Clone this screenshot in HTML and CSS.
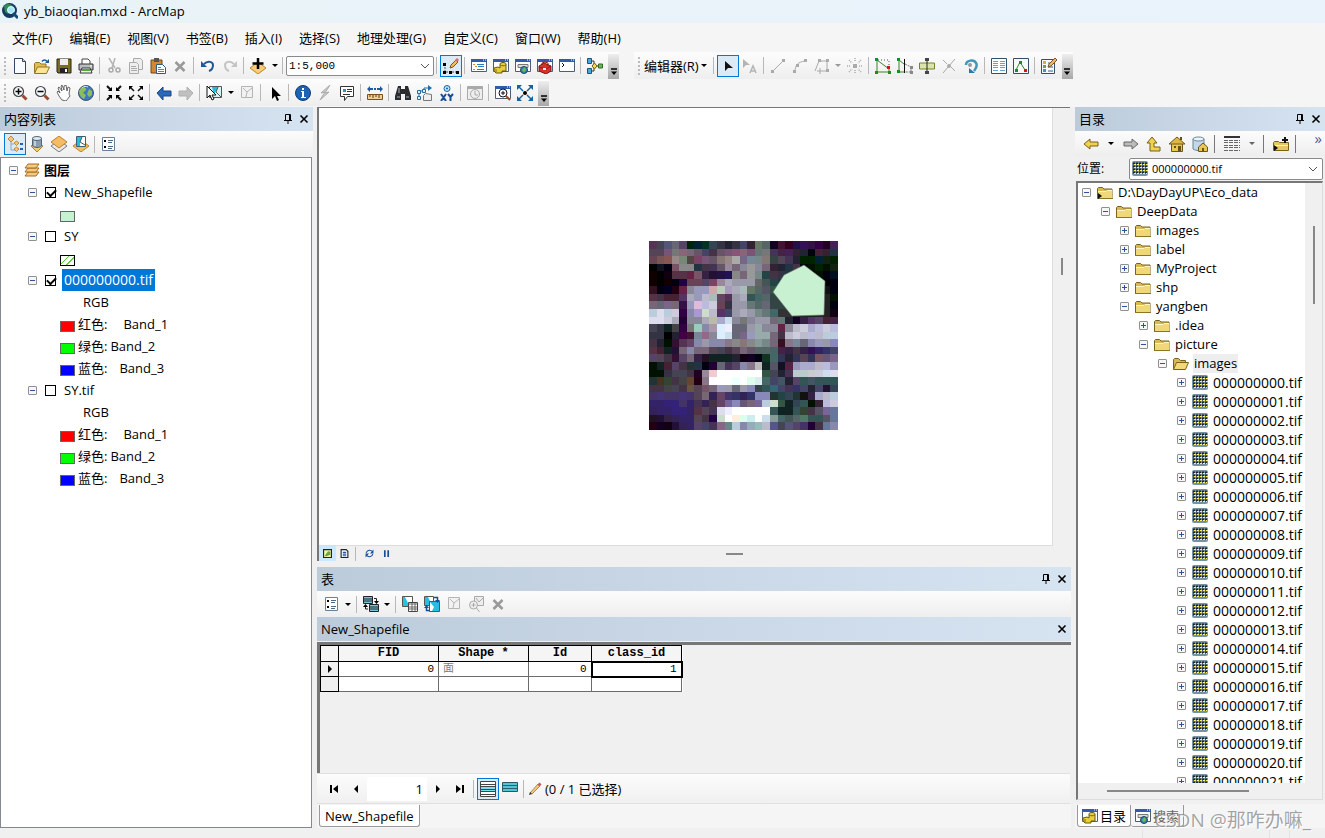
FILE: index.html
```
<!DOCTYPE html>
<html lang="zh-CN">
<head>
<meta charset="utf-8">
<title>yb_biaoqian.mxd - ArcMap</title>
<link rel="stylesheet" href="styles.css">
</head>
<body>
<svg class="sprite" aria-hidden="true">
  <symbol id="new" viewBox="0 0 16 16"><path d="M2.5.5h8l3 3v12h-11z" fill="#f8fbff" stroke="#34465f"/><path d="M10.5.5v3h3" fill="#c8d6e8" stroke="#34465f"/></symbol>
  <symbol id="open" viewBox="0 0 16 16"><path d="M.5 15V5.500l1-1h4l1.500 1.500h5v3" fill="#e2bd55" stroke="#957320"/><path d="M.5 15.500 3.500 9h12l-3 6.500z" fill="#fbe496" stroke="#957320"/><path d="M8 3.500c1.500-2 3.500-2 5 0" fill="none" stroke="#16599c" stroke-width="1.500"/><path d="M15 1v4h-4z" fill="#16599c"/></symbol>
  <symbol id="save" viewBox="0 0 16 16"><path d="M1 1h14v14H2l-1-1z" fill="#7b6e22" stroke="#28251a"/><path d="M4 1h8v6H4z" fill="#eee"/><path d="M4 10h8v5H4z" fill="#222"/><path d="M9 11h2v3H9z" fill="#fff"/></symbol>
  <symbol id="print" viewBox="0 0 16 16"><path d="M4 6V1h6l2 2v3" fill="#fff" stroke="#444"/><path d="M1 6h14v6H1z" fill="#b8bdc0" stroke="#333"/><path d="M4 10h8l2 5H2z" fill="#fff" stroke="#333"/><path d="M4 12h8" stroke="#4aae35" stroke-width="2"/><path d="M12 8h2" stroke="#fff"/></symbol>
  <symbol id="cut" viewBox="0 0 16 16"><path d="M3 0l6 10M9 0 6 10" stroke="#b5b5b5" stroke-width="1.500"/><g fill="none" stroke="#aaa" stroke-width="1.500"><circle cx="5" cy="12" r="2"/><circle cx="12" cy="12" r="2"/></g></symbol>
  <symbol id="copy" viewBox="0 0 16 16"><g fill="#eee" stroke="#aaa"><path d="M5.500.5h7l2 2v9h-9z"/><path d="M1.500 4.500h7l2 2v9h-9zM3 8.500h5M3 10.500h6M3 12.500h6"/></g></symbol>
  <symbol id="paste" viewBox="0 0 16 16"><path d="M1 2h11v13H1z" fill="#d18a2b" stroke="#6b4a1d"/><path d="M4 0h5v4H4z" fill="#555"/><path d="M6.500 6.500h6l3 3v6h-9z" fill="#fff" stroke="#345781"/><path d="M8 9.500h3M8 11.500h6M8 13.500h6" stroke="#4787c5"/></symbol>
  <symbol id="delete" viewBox="0 0 16 16"><path d="m3.500 4 9 9m0-9-9 9" stroke="#999" stroke-width="2.500"/></symbol>
  <symbol id="undo" viewBox="0 0 16 16"><path d="M4 6c4-4 9-2 9 1 0 3-1 5-4 6" fill="none" stroke="#205795" stroke-width="2"/><path d="M1 3v6h6z" fill="#205795"/></symbol>
  <symbol id="redo" viewBox="0 0 16 16"><path d="M12 6C8 2 3 4 3 7c0 3 1 5 4 6" fill="none" stroke="#c4c4c4" stroke-width="2"/><path d="M15 3v6H9z" fill="#c4c4c4"/></symbol>
  <symbol id="add" viewBox="0 0 16 16"><path d="m0 10 8-6 8 6-8 6z" fill="#f7cd75" stroke="#ba852c"/><path d="M8 0v11M2.500 5.500h11" stroke="#000" stroke-width="2.500"/></symbol>
  <symbol id="edit" viewBox="0 0 16 16"><path d="M2 6v8h12" fill="none" stroke="#555" stroke-dasharray="2 1"/><path d="M0 5h3v3H0zm0 8h3v3H0zm6 0h3v3H6zm7 0h3v3h-3z"/><path d="m7 10 1-3 5-5 2 2-5 5z" fill="#f5bd5c" stroke="#79541e"/><path d="m13 1 2 2" stroke="#d4706c" stroke-width="3"/></symbol>
  <symbol id="win" viewBox="0 0 16 16"><path d="M.5 1.500h15v12H.5z" fill="#fff" stroke="#4f5f70"/><path d="M0 1h16v3H0z" fill="#315cae"/><path d="M12 2h1m1 0h1" stroke="#fff"/></symbol>
  <symbol id="toc" viewBox="0 0 16 16"><use href="#win"/><path d="M2 6.500h2m0 2h2m-4 3h2" stroke="#d7901f"/><path d="M6 6.500h7M7 8.500h6M6 11.500h7" stroke="#2d78be"/></symbol>
  <symbol id="catalog" viewBox="0 0 16 16"><use href="#win"/><path d="M7 6c0-2 6-2 6 0v7H9v2H3l-2-2v-3l4-1 2 1z" fill="#e8ce39" stroke="#685910"/><path d="M7 7c2 1 4 1 6 0M3 11v3" fill="none" stroke="#78661a"/></symbol>
  <symbol id="search" viewBox="0 0 16 16"><use href="#win"/><path d="M3 6.500h10v3H3z" fill="#ddd" stroke="#777"/><circle cx="9" cy="12" r="3.500" fill="#2f89bd" stroke="#245"/><path d="m7 12 3-3 1 3-2 2z" fill="#72bb4b"/></symbol>
  <symbol id="toolbox" viewBox="0 0 16 16"><use href="#win"/><path d="m2 8 5-3 7 3v5l-5 3-7-3z" fill="#d83228" stroke="#761c18"/><path d="M5 7V5l3-1 3 1v3M2 9l7 2 5-3" fill="none" stroke="#8e1b17"/><path d="M6 10h3v2H6z" fill="#eee"/></symbol>
  <symbol id="python" viewBox="0 0 16 16"><use href="#win"/><path d="m3 5 2 2-2 2" fill="none" stroke="#111"/></symbol>
  <symbol id="model" viewBox="0 0 16 16"><path d="M4 3h3v10H4m3-5h6" fill="none" stroke="#333"/><path d="M.5.5h4v5h-4zm0 10h4v5h-4z" fill="#49a8d9" stroke="#17577d"/><path d="m5 8 2.500-3L10 8l-2.500 3z" fill="#f5d94b" stroke="#6c6019"/><path d="M11.500 6h4v4h-4z" fill="#66bb50" stroke="#316a25"/></symbol>
  <symbol id="pointer" viewBox="0 0 16 16"><path d="M5 2v12l3-3 2 5 2-1-2-4h4z"/></symbol>
  <symbol id="editptr" viewBox="0 0 16 16"><path d="M5 3v10l3-3h5z" fill="#111"/></symbol>
  <symbol id="annot" viewBox="0 0 16 16"><path d="M1 1v9l3-3h4z" fill="#b4b4b4"/><path d="m8 15 3-7 3 7m-5-2h4" fill="none" stroke="#b4b4b4" stroke-width="1.500"/></symbol>
  <symbol id="line" viewBox="0 0 16 16"><path d="m3 13 10-10" stroke="#aaa"/><path d="M1 12h3v3H1zM12 1h3v3h-3z" fill="#aaa"/></symbol>
  <symbol id="arc" viewBox="0 0 16 16"><path d="M3 14C3 7 6 4 13 3" fill="none" stroke="#aaa"/><path d="M1 12h3v3H1zm3-6h3v3H4zm8-5h3v3h-3z" fill="#aaa"/></symbol>
  <symbol id="poly" viewBox="0 0 16 16"><path d="M1 13 5 3h8v10H9m-3-3v6m-3-3h6" fill="none" stroke="#aaa"/><path d="M4 1h3v3H4zm8 0h3v3h-3zm0 10h3v3h-3z" fill="#aaa"/></symbol>
  <symbol id="burst" viewBox="0 0 16 16"><path d="M6 6h4v4H6z" fill="#aaa"/><path d="M8 0v4m0 8v4M0 8h4m8 0h4M2 2l3 3m9-3-3 3M2 14l3-3m9 3-3-3" stroke="#aaa" stroke-width="1.500" stroke-dasharray="1 1"/></symbol>
  <symbol id="vertex" viewBox="0 0 16 16"><path d="m2 2 12 9v3H2z" fill="none" stroke="#39832e"/><path d="M3 2h11v8" fill="none" stroke="#555" stroke-dasharray="1 2"/><path d="M0 0h3v3H0zm0 13h3v3H0zm13 0h3v3h-3z" fill="#139026"/><path d="M12 8h3v3h-3z" fill="#d31717"/></symbol>
  <symbol id="reshape" viewBox="0 0 16 16"><path d="M2 1v13h5M2 2l5 4" fill="none" stroke="#39832e"/><path d="M7.500 1v14" stroke="#111"/><path d="m8 6 6 3v5H8" fill="none" stroke="#777" stroke-dasharray="2 1"/><path d="M0 0h3v3H0zm0 12h3v3H0z" fill="#139026"/><path d="M13 8h3v3h-3zm0 5h3v3h-3z" fill="#888"/></symbol>
  <symbol id="split" viewBox="0 0 16 16"><path d="M.5 5h15v6H.5z" fill="#dce5a7" stroke="#74852d"/><path d="M8 1v14" stroke="#222"/><path d="M6 0h4v3H6zm0 13h4v3H6z" fill="#444"/></symbol>
  <symbol id="cross" viewBox="0 0 16 16"><path d="M2 15 14 1M2 2l4 4m4 3 4 4" stroke="#aaa"/><circle cx="8" cy="8" r="2" fill="#aaa"/></symbol>
  <symbol id="rotate" viewBox="0 0 16 16"><path d="M3 7c0-5 8-6 10-2 2 3 0 5-2 8" fill="none" stroke="#4197bb" stroke-width="2.500"/><path d="M6 10v5h6z" fill="#2a78a0"/><circle cx="7" cy="7" r="2" fill="#999"/></symbol>
  <symbol id="attr" viewBox="0 0 16 16"><path d="M.5.5h15v15H.5z" fill="#fff" stroke="#344f68"/><path d="M2 3.500h5m2 0h5m-12 2h5m2 0h5m-12 2h5m2 0h5m-12 2h5m2 0h5m-12 3h5m2 0h5" stroke="#6aa0cc"/></symbol>
  <symbol id="sketch" viewBox="0 0 16 16"><path d="M.5.5h15v15H.5z" fill="#f7fbff" stroke="#344f68"/><path d="m3 12 4-8 5 8" fill="none" stroke="#39832e"/><path d="M2 11h3v3H2zm4-8h3v3H6z" fill="#139026"/><path d="M11 11h3v3h-3z" fill="#d31717"/></symbol>
  <symbol id="create" viewBox="0 0 16 16"><path d="M.5 1.500h13v14H.5z" fill="#f7fbff" stroke="#344f68"/><path d="M2 3h3v3H2z" fill="#e1ad2c"/><path d="M2 7h3v3H2z" fill="#70a43d"/><path d="M2 11h3v3H2z" fill="#518dba"/><path d="M7 5h5M7 9h5m-5 4h5" stroke="#365a77"/><path d="m7 9 1-3 6-6 2 2-6 6z" fill="#e6b866" stroke="#835733"/></symbol>
  <symbol id="mag" viewBox="0 0 16 16"><circle cx="6.500" cy="6.500" r="5" fill="#f4f8fa" stroke="#444" stroke-width="1.200"/><path d="m10.500 10.500 4 4" stroke="#9b4a31" stroke-width="3"/></symbol>
  <symbol id="zin" viewBox="0 0 16 16"><use href="#mag"/><path d="M3.500 6.500h6m-3-3v6" stroke="#000" stroke-width="1.500"/></symbol>
  <symbol id="zout" viewBox="0 0 16 16"><use href="#mag"/><path d="M3.500 6.500h6" stroke="#000" stroke-width="1.500"/></symbol>
  <symbol id="hand" viewBox="0 0 16 16"><path d="M6 15 3 11 1 7l1-1 2 2-2-5 1-1 3 4-1-5 1-1 2 5V1l2-1 1 6 1-4 2 1-1 6 1 2-4 5z" fill="#fff" stroke="#444" stroke-width=".8"/></symbol>
  <symbol id="globe" viewBox="0 0 16 16"><circle cx="8" cy="8" r="7.500" fill="#3d79bd" stroke="#456"/><path d="M3 3c3-2 6 0 5 2L5 8l3 2-2 4C3 13 1 9 1 6zm8 1 3 2v4l-3 2-2-3z" fill="#8cbf58"/><path d="M4 3c2-2 4-2 6-1" fill="none" stroke="#d3edfc"/></symbol>
  <symbol id="inward" viewBox="0 0 16 16"><path d="m1 1 4 4m10-4-4 4M1 15l4-4m10 4-4-4" stroke="#111" stroke-width="2"/><path d="M6 2v4H2zm4 0v4h4zM6 14v-4H2zm4 0v-4h4z"/></symbol>
  <symbol id="outward" viewBox="0 0 16 16"><path d="m2 2 4 4m8-4-4 4m-8 8 4-4m8 4-4-4" stroke="#111" stroke-width="1.500"/><path d="M1 1h4L1 5zm14 0h-4l4 4zM1 15h4l-4-4zm14 0h-4l4-4z"/></symbol>
  <symbol id="back" viewBox="0 0 16 16"><path d="m1 8 6-6v4h8v5H7v4z" fill="#2a69ba" stroke="#174786"/></symbol>
  <symbol id="fwd" viewBox="0 0 16 16"><path d="m15 8-6-6v4H1v5h8v4z" fill="#c0c0c0" stroke="#b0b0b0"/></symbol>
  <symbol id="select" viewBox="0 0 16 16"><path d="M3.500 1.500h12v11h-12z" fill="#d8f1f2" stroke="#555"/><path d="M6 2h6l-4 8z" fill="#22bde1"/><path d="m12 2-2 5 5 5" fill="none" stroke="#555"/><path d="M1 1v12l3-3 2 5 2-1-2-4h4z" fill="#fff" stroke="#111"/></symbol>
  <symbol id="clear" viewBox="0 0 16 16"><path d="M2.500 1.500h11v11h-11z" fill="#f2f2f2" stroke="#b5b5b5"/><path d="m4 3 4 4 5-4M8 7l-1 5" fill="none" stroke="#b5b5b5"/></symbol>
  <symbol id="info" viewBox="0 0 16 16"><circle cx="8" cy="8" r="7.500" fill="#1e62b4" stroke="#153a72"/><path d="M7 3h2v2H7zM6 6h3v6h2v1H6v-1h1V7H6z" fill="#fff"/></symbol>
  <symbol id="bolt" viewBox="0 0 16 16"><path d="M13 0 4 8l4-1-5 8 9-8-4 1z" fill="#ccc" stroke="#aaa"/></symbol>
  <symbol id="popup" viewBox="0 0 16 16"><path d="M1.500 1.500h13v10h-6l-3 4v-4h-4z" fill="#fff" stroke="#333"/><path d="M4 4h3v3H4z" fill="#3c8cc0"/><path d="M8 4.500h5M8 6.500h5M4 9.500h7" stroke="#333"/></symbol>
  <symbol id="measure" viewBox="0 0 16 16"><path d="m0 4 3-3v2h3v2H3v2zm16 0-3-3v2h-3v2h3v2z" fill="#195ca4"/><path d="M7 3h2v2H7z" fill="#195ca4"/><path d="M.5 9.500h15v5H.5z" fill="#f1d091" stroke="#7b4e1e"/><path d="M3 10v2m3-2v3m3-3v2m3-2v3" stroke="#5d3512"/></symbol>
  <symbol id="binoc" viewBox="0 0 16 16"><path d="M3 1h3v3h4V1h3l3 10v4h-6V9H6v6H0v-4z" fill="#292d30"/><path d="M2 12h3m6 0h3M4 3v5" stroke="#a5aeb3"/></symbol>
  <symbol id="route" viewBox="0 0 16 16"><path d="M2 13V6h5V3h5" fill="none" stroke="#226da5"/><path d="m11 0 4 3-4 3z" fill="#226da5"/><path d="M.5 5.500h3v3h-3zm0 6h3v3h-3zm5-7h3v3h-3z" fill="#dff0fa" stroke="#226da5"/><path d="m6.500 10.500 2-2 6 1v6h-8z" fill="#eee" stroke="#777"/></symbol>
  <symbol id="xy" viewBox="0 0 16 16"><circle cx="8" cy="3.500" r="3" fill="#c4e4f8" stroke="#1762a1"/><circle cx="8" cy="3.500" r="1" fill="#1762a1"/><path d="m2 9 5 7m0-7-5 7m7-7 2.500 3L14 9m-2.500 3v4" fill="none" stroke="#164f92" stroke-width="2"/></symbol>
  <symbol id="time" viewBox="0 0 16 16"><path d="M.5 1.500h15v13H.5z" fill="#eee" stroke="#aaa"/><path d="M1 3h14" stroke="#aaa" stroke-width="2"/><circle cx="8" cy="9" r="4.500" fill="#eee" stroke="#aaa"/><path d="M8 6v4h3" fill="none" stroke="#aaa"/></symbol>
  <symbol id="viewer" viewBox="0 0 16 16"><use href="#win"/><circle cx="8" cy="8" r="4" fill="#f8fafb" stroke="#111"/><path d="M8 6v4M6 8h4" stroke="#111"/><path d="m11 11 4 4" stroke="#9b4a31" stroke-width="2"/></symbol>
  <symbol id="net" viewBox="0 0 16 16"><path d="m2 2 4 4m8-4-4 4m-8 8 4-4m8 4-4-4" stroke="#1762a1" stroke-width="1.500"/><path d="M0 0h5L0 5zm16 0h-5l5 5zM0 16h5l-5-5zm16 0h-5l5-5z" fill="#1762a1"/><circle cx="8" cy="8" r="2"/></symbol>
  <symbol id="order" viewBox="0 0 16 16"><path d="M4 5v9h4M4 8h3" fill="none" stroke="#8ba7bd"/><path d="m1 3 3-3 3 3-3 3zm6 4 2.500-2L12 7 9.500 9.500zm0 6 2.500-2 2.500 2-2.500 2.500z" fill="#f4c477" stroke="#c48b37"/><path d="M13 8h3m-3 5h3" stroke="#2065b0" stroke-width="2"/></symbol>
  <symbol id="source" viewBox="0 0 16 16"><path d="m2 10 6-3 6 3-6 6z" fill="#f5cb74" stroke="#b28232"/><path d="M3.500 2v8c2 2 7 2 9 0V2z" fill="#8b9db0" stroke="#546576"/><ellipse cx="8" cy="2.500" rx="4.500" ry="2" fill="#e2eaf2" stroke="#546576"/><path d="M6 5v5" stroke="#fff"/></symbol>
  <symbol id="visible" viewBox="0 0 16 16"><path d="m0 10 8-6 8 6-8 6z" fill="#e9e9e9" stroke="#777"/><path d="m0 6 8-6 8 6-8 6z" fill="#f4bd63" stroke="#bd7f2e"/></symbol>
  <symbol id="selectlist" viewBox="0 0 16 16"><path d="m0 10 8-6 8 6-8 6z" fill="#f4bd63" stroke="#bd7f2e"/><path d="M3.500.5h9v10h-9z" fill="#fff" stroke="#3d606e"/><path d="M4 1h5l-2 5v4H4z" fill="#22bde1"/><path d="M9 1 7 6l5 3" fill="none" stroke="#3d606e"/></symbol>
  <symbol id="options" viewBox="0 0 16 16"><path d="M1.500 1.500h12v13h-12z" fill="#fff" stroke="#6c7f98"/><path d="M7 4.500h5m-5 2h4m-4 4h5m-5 2h4" stroke="#4c6787"/><path d="M3 4h2v2H3zm0 6h2v2H3z"/></symbol>
  <symbol id="layers" viewBox="0 0 16 16"><g fill="#f5ca7c" stroke="#a46b24"><path d="m1 14 3-4h11l-3 4z"/><path d="m1 10 3-4h11l-3 4z"/><path d="m1 6 3-4h11l-3 4z"/></g></symbol>
  <symbol id="folder" viewBox="0 0 16 16"><path d="M.5 13.500v-10l1-1h4l1.500 1.500h8v9.500z" fill="#d8b951" stroke="#796319"/><path d="M1 6h14v7H1z" fill="#efd878"/><path d="M1 6.500h8l1-1h5" fill="none" stroke="#fff6c4"/><path d="M0 13.500h16" stroke="#8b7424"/></symbol>
  <symbol id="folderopen" viewBox="0 0 16 16"><path d="M.5 13.500v-10l1-1h4l2 2h5v3" fill="#d8b951" stroke="#796319"/><path d="m.5 13.500 3-7h12l-3 7z" fill="#f1d878" stroke="#796319"/></symbol>
  <symbol id="connect" viewBox="0 0 16 16"><use href="#folder"/><path d="M1 8v6l4-3z" fill="#111"/></symbol>
  <symbol id="addfolder" viewBox="0 0 16 16"><path d="M.5 14.500v-8l1-1h4l1 1h9v8z" fill="#e5c860" stroke="#796319"/><path d="M1 9.500h14" stroke="#fff6c4"/><path d="M1 9v6l4-3zM11 1h2v2h2v2h-2v2h-2V5H9V3h2z" fill="#111"/></symbol>
  <symbol id="raster" viewBox="0 0 16 16"><rect width="16" height="15" rx="2" fill="#7593a5"/><g stroke-width="2"><path d="M1 2.500h14M1 5.500h14M1 8.500h14M1 11.500h14" stroke="#1d2529" stroke-dasharray="2 1"/><path d="M2 3.500h14M2 6.500h14M2 9.500h14M2 12.500h13" stroke="#fff36b" stroke-width="1" stroke-dasharray="2 1"/></g></symbol>
  <symbol id="goback" viewBox="0 0 16 16"><path d="m1 8 6-5v3h8v4H7v3z" fill="#f0d24f" stroke="#756018"/></symbol>
  <symbol id="gofwd" viewBox="0 0 16 16"><path d="m15 8-6-5v3H1v4h8v3z" fill="#bbb" stroke="#666"/></symbol>
  <symbol id="up" viewBox="0 0 16 16"><path d="m6 1 5 6H8v4h6v4H4V7H1z" fill="#f0d24f" stroke="#756018"/></symbol>
  <symbol id="home" viewBox="0 0 16 16"><path d="M2.500 7h11v8.500h-11z" fill="#e8c853" stroke="#6c5719"/><path d="m0 8 8-7 8 7z" fill="#dcb743" stroke="#755a17"/><path d="M5 10h2v2H5zm4 0h3v5H9zm2-9h2v3h-2z" fill="#655017"/></symbol>
  <symbol id="dbhome" viewBox="0 0 16 16"><path d="M1 3v10c3 2 8 2 11 0V3z" fill="#c3d9e8" stroke="#688599"/><ellipse cx="6.500" cy="3" rx="5.500" ry="2" fill="#eaf4fa" stroke="#688599"/><path d="m6.500 11 4.500-4 4.500 4v4.500h-9z" fill="#e8c853" stroke="#6c5719"/><path d="M10 12h2v3h-2z" fill="#6c5719"/></symbol>
  <symbol id="details" viewBox="0 0 16 16"><path d="M0 1h16" stroke="#333" stroke-width="2"/><path d="M0 4.500h16M0 6.500h16M0 9.500h16M0 11.500h16M0 14.500h16" stroke="#666" stroke-dasharray="4 1"/></symbol>
  <symbol id="related" viewBox="0 0 16 16"><path d="M.5.5h9v7h-9z" fill="#76c5d6" stroke="#222"/><path d="M1 3h8M1 5h8" stroke="#222"/><path d="M6.500 8.500h9v7h-9z" fill="#76c5d6" stroke="#222"/><path d="M7 11h8m-8 2h8M11 2.500h2.500V6M5 13H2.500V9" fill="none" stroke="#222"/><path d="M11 5h5l-2.500 3zM0 11h5L2.500 8z"/></symbol>
  <symbol id="selattr" viewBox="0 0 16 16"><path d="M.5.5h10v10H.5z" fill="#22c4e4" stroke="#555"/><path d="m3 1 3 6h4V1z" fill="#fff"/><path d="M6.500 6.500h9v9h-9z" fill="#fff" stroke="#444"/><path d="M7 8h8m-8 3h8m-8 2h8M10 7v8m3-8v8" stroke="#666"/></symbol>
  <symbol id="switch" viewBox="0 0 16 16"><path d="M.5.5h9v9h-9z" fill="#fff" stroke="#555"/><path d="M1 1h3l4 8H1z" fill="#26bfe1"/><path d="M5.500 5.500h10v10h-10z" fill="#26bfe1" stroke="#555"/><path d="m6 6 4 5-2 4H6z" fill="#fff"/><path d="M10 1.500h3.500V5M6 14.500H2.500V11" fill="none" stroke="#164f92" stroke-width="1.500"/><path d="M11 4h5l-2.500 3zM0 12h5l-2.500-3z" fill="#164f92"/></symbol>
  <symbol id="zoomsel" viewBox="0 0 16 16"><path d="M6.500.5h9v9h-9z" fill="#eee" stroke="#aaa"/><path d="m8 2 3 4 4-4" fill="none" stroke="#aaa"/><circle cx="5.500" cy="9" r="4" fill="#eee" stroke="#aaa"/><path d="M5.500 7v4m-2-2h4m1 3 3 4" stroke="#aaa"/></symbol>
  <symbol id="mapview" viewBox="0 0 16 16"><path d="M1 1h14v14H1z" fill="#f4f2a4" stroke="#223" stroke-width="2"/><path d="m3 12 6-8 4 1v5l-7 3z" fill="#67a642"/></symbol>
  <symbol id="layout" viewBox="0 0 16 16"><path d="M2 1h9l3 3v11H2z" fill="#fff" stroke="#222" stroke-width="2"/><path d="M5 6h6M5 9h6m-6 3h6" stroke="#27599d" stroke-width="2"/></symbol>
  <symbol id="refresh" viewBox="0 0 16 16"><path d="M2 7c2-6 8-6 12-2M14 9c-2 6-8 6-12 2" fill="none" stroke="#164f92" stroke-width="2"/><path d="M15 1v7H9zM1 15V8h6z" fill="#164f92"/></symbol>
  <symbol id="pause" viewBox="0 0 16 16"><path d="M5 2v12m6-12v12" stroke="#164f92" stroke-width="3"/></symbol>
  <symbol id="pin" viewBox="0 0 10 10"><path d="M2.500.5h5v6h-5zM1 6.500h8M5 7v3M6.500 1v5" fill="none" stroke="#000"/></symbol>
  <symbol id="close" viewBox="0 0 10 10"><path d="m1.500 1.500 7 7m0-7-7 7" stroke="#000" stroke-width="1.600"/></symbol>
  <symbol id="chev" viewBox="0 0 10 10"><path d="m1 3 4 4 4-4" fill="none" stroke="#555"/></symbol>
  <symbol id="overflow" viewBox="0 0 8 8"><path d="M1 1h6" stroke="#000" stroke-width="1.500"/><path d="M1 3.500h6L4 7z"/></symbol>
  <symbol id="first" viewBox="0 0 10 10"><path d="M1 1h2v8H1zm8 0v8L4 5z"/></symbol>
  <symbol id="prev" viewBox="0 0 10 10"><path d="M7 1v8L3 5z"/></symbol>
  <symbol id="next" viewBox="0 0 10 10"><path d="M3 1v8l4-4z"/></symbol>
  <symbol id="last" viewBox="0 0 10 10"><path d="M7 1h2v8H7zM1 1v8l5-4z"/></symbol>
  <symbol id="allrec" viewBox="0 0 16 16"><path d="M.5.5h15v15H.5z" fill="#fff" stroke="#444"/><path d="M1 6h14v5H1z" fill="#7fdcec"/><path d="M1 3.500h14M1 5.500h14M1 8.500h14M1 10.500h14M1 13.500h14" stroke="#444"/></symbol>
  <symbol id="selrec" viewBox="0 0 16 16"><path d="M.5 1.500h15v9H.5z" fill="#55c4d5" stroke="#2b5962"/><path d="M1 4.500h14M1 7.500h14" stroke="#27646e"/></symbol>
  <symbol id="pencil" viewBox="0 0 16 16"><path d="m3 12 8-9 2 2-8 8z" fill="#f0c77b" stroke="#9b7641" stroke-width=".8"/><path d="m11.500 2.500 2 2" stroke="#c05a60" stroke-width="3"/><path d="m2 14 1-3 2 2z" fill="#333"/></symbol>
  <symbol id="app" viewBox="0 0 16 16"><circle cx="7.500" cy="7.500" r="7.500" fill="#123a62"/><path d="M2 3c3-3 7-2 9 0l-3 3-2 5-3-2z" fill="#358a57"/><circle cx="9" cy="7" r="3.500" fill="#a6e4f5" stroke="#dff"/><path d="m11 10 5 5" stroke="#174c70" stroke-width="3"/></symbol>
</svg>

<div class="app">
  <header class="titlebar"><svg class="i16"><use href="#app"/></svg><span>yb_biaoqian.mxd - ArcMap</span></header>
  <nav class="menubar">
    <button>文件(F)</button><button>编辑(E)</button><button>视图(V)</button><button>书签(B)</button><button>插入(I)</button><button>选择(S)</button><button>地理处理(G)</button><button>自定义(C)</button><button>窗口(W)</button><button>帮助(H)</button>
  </nav>

  <div class="toolrow">
    <div class="toolbar">
      <span class="grip"></span>
      <button class="tb" aria-label="新建"><svg><use href="#new"/></svg></button>
      <button class="tb" aria-label="打开"><svg><use href="#open"/></svg></button>
      <button class="tb" aria-label="保存"><svg><use href="#save"/></svg></button>
      <button class="tb" aria-label="打印"><svg><use href="#print"/></svg></button>
      <span class="sep"></span>
      <button class="tb" aria-label="剪切"><svg><use href="#cut"/></svg></button>
      <button class="tb" aria-label="复制"><svg><use href="#copy"/></svg></button>
      <button class="tb" aria-label="粘贴"><svg><use href="#paste"/></svg></button>
      <button class="tb" aria-label="删除"><svg><use href="#delete"/></svg></button>
      <span class="sep"></span>
      <button class="tb" aria-label="撤消"><svg><use href="#undo"/></svg></button>
      <button class="tb" aria-label="恢复"><svg><use href="#redo"/></svg></button>
      <span class="sep"></span>
      <button class="tb" aria-label="添加数据"><svg><use href="#add"/></svg></button>
      <button class="drop" aria-label="添加数据选项"></button>
      <span class="sep"></span>
      <span class="combo scale"><select aria-label="比例"><option>1:5,000</option></select><svg><use href="#chev"/></svg></span>
      <span class="sep"></span>
      <button class="tb on" aria-label="编辑器工具条"><svg><use href="#edit"/></svg></button>
      <span class="sep"></span>
      <button class="tb" aria-label="内容列表窗口"><svg><use href="#toc"/></svg></button>
      <button class="tb" aria-label="目录窗口"><svg><use href="#catalog"/></svg></button>
      <button class="tb" aria-label="搜索窗口"><svg><use href="#search"/></svg></button>
      <button class="tb" aria-label="工具箱"><svg><use href="#toolbox"/></svg></button>
      <button class="tb" aria-label="Python"><svg><use href="#python"/></svg></button>
      <span class="sep"></span>
      <button class="tb" aria-label="模型构建器"><svg><use href="#model"/></svg></button>
      <button class="over" aria-label="工具条选项"><svg><use href="#overflow"/></svg></button>
    </div>
    <div class="toolbar editor">
      <span class="grip"></span>
      <button class="menu">编辑器(R)<i class="caret"></i></button>
      <span class="sep"></span>
      <button class="tb on" aria-label="编辑工具"><svg><use href="#editptr"/></svg></button>
      <button class="tb" aria-label="编辑注记"><svg><use href="#annot"/></svg></button>
      <span class="sep"></span>
      <button class="tb" aria-label="直线段"><svg><use href="#line"/></svg></button>
      <button class="tb" aria-label="弧段"><svg><use href="#arc"/></svg></button>
      <button class="tb" aria-label="追踪"><svg><use href="#poly"/></svg></button>
      <button class="drop off" aria-label="构造选项"></button>
      <button class="tb" aria-label="点"><svg><use href="#burst"/></svg></button>
      <span class="sep"></span>
      <button class="tb" aria-label="编辑折点"><svg><use href="#vertex"/></svg></button>
      <button class="tb" aria-label="整形要素"><svg><use href="#reshape"/></svg></button>
      <button class="tb" aria-label="裁剪面"><svg><use href="#split"/></svg></button>
      <button class="tb" aria-label="分割"><svg><use href="#cross"/></svg></button>
      <button class="tb" aria-label="旋转"><svg><use href="#rotate"/></svg></button>
      <span class="sep"></span>
      <button class="tb" aria-label="属性"><svg><use href="#attr"/></svg></button>
      <button class="tb" aria-label="草图属性"><svg><use href="#sketch"/></svg></button>
      <span class="sep"></span>
      <button class="tb" aria-label="创建要素"><svg><use href="#create"/></svg></button>
      <button class="over" aria-label="编辑器选项"><svg><use href="#overflow"/></svg></button>
    </div>
  </div>
  <div class="toolrow">
    <div class="toolbar">
      <span class="grip"></span>
      <button class="tb" aria-label="放大"><svg><use href="#zin"/></svg></button>
      <button class="tb" aria-label="缩小"><svg><use href="#zout"/></svg></button>
      <button class="tb" aria-label="平移"><svg><use href="#hand"/></svg></button>
      <button class="tb" aria-label="全图"><svg><use href="#globe"/></svg></button>
      <span class="sep"></span>
      <button class="tb" aria-label="固定比例放大"><svg><use href="#inward"/></svg></button>
      <button class="tb" aria-label="固定比例缩小"><svg><use href="#outward"/></svg></button>
      <span class="sep"></span>
      <button class="tb" aria-label="上一视图"><svg><use href="#back"/></svg></button>
      <button class="tb" aria-label="下一视图"><svg><use href="#fwd"/></svg></button>
      <span class="sep"></span>
      <button class="tb" aria-label="选择要素"><svg><use href="#select"/></svg></button>
      <button class="drop" aria-label="选择选项"></button>
      <button class="tb" aria-label="清除选择"><svg><use href="#clear"/></svg></button>
      <span class="sep"></span>
      <button class="tb" aria-label="选择元素"><svg><use href="#pointer"/></svg></button>
      <span class="sep"></span>
      <button class="tb" aria-label="识别"><svg><use href="#info"/></svg></button>
      <button class="tb" aria-label="超链接"><svg><use href="#bolt"/></svg></button>
      <button class="tb" aria-label="弹出窗口"><svg><use href="#popup"/></svg></button>
      <span class="sep"></span>
      <button class="tb" aria-label="测量"><svg><use href="#measure"/></svg></button>
      <span class="sep"></span>
      <button class="tb" aria-label="查找"><svg><use href="#binoc"/></svg></button>
      <button class="tb" aria-label="查找路径"><svg><use href="#route"/></svg></button>
      <button class="tb" aria-label="转到 XY"><svg><use href="#xy"/></svg></button>
      <span class="sep"></span>
      <button class="tb" aria-label="时间滑块"><svg><use href="#time"/></svg></button>
      <span class="sep"></span>
      <button class="tb" aria-label="查看器窗口"><svg><use href="#viewer"/></svg></button>
      <button class="tb" aria-label="缩放网络"><svg><use href="#net"/></svg></button>
      <button class="over" aria-label="工具选项"><svg><use href="#overflow"/></svg></button>
    </div>
  </div>

  <main class="work">
    <aside class="contents">
      <div class="caption"><h2>内容列表</h2><button aria-label="固定"><svg><use href="#pin"/></svg></button><button aria-label="关闭"><svg><use href="#close"/></svg></button></div>
      <div class="bar">
        <button class="tb on" aria-label="按绘制顺序列出"><svg><use href="#order"/></svg></button>
        <button class="tb" aria-label="按源列出"><svg><use href="#source"/></svg></button>
        <button class="tb" aria-label="按可见性列出"><svg><use href="#visible"/></svg></button>
        <button class="tb" aria-label="按选择列出"><svg><use href="#selectlist"/></svg></button>
        <span class="sep"></span>
        <button class="tb" aria-label="选项"><svg><use href="#options"/></svg></button>
      </div>
      <div class="toc">
        <div class="line root"><button class="ex" aria-label="折叠图层"></button><svg class="i16"><use href="#layers"/></svg><b>图层</b></div>
        <div class="line"><button class="ex" aria-label="折叠"></button><label><input type="checkbox" checked><span>New_Shapefile</span></label></div>
        <div class="line leaf"><i class="sw mint"></i></div>
        <div class="line"><button class="ex" aria-label="折叠"></button><label><input type="checkbox"><span>SY</span></label></div>
        <div class="line leaf"><i class="sw hatch"></i></div>
        <div class="line"><button class="ex" aria-label="折叠"></button><label><input type="checkbox" checked><span class="sel">000000000.tif</span></label></div>
        <div class="line rgb">RGB</div>
        <div class="line leaf"><i class="sw red"></i><span>红色:</span><span class="b1">Band_1</span></div>
        <div class="line leaf"><i class="sw green"></i><span>绿色:</span><span class="b2">Band_2</span></div>
        <div class="line leaf"><i class="sw blue"></i><span>蓝色:</span><span class="b3">Band_3</span></div>
        <div class="line"><button class="ex" aria-label="折叠"></button><label><input type="checkbox"><span>SY.tif</span></label></div>
        <div class="line rgb">RGB</div>
        <div class="line leaf"><i class="sw red"></i><span>红色:</span><span class="b1">Band_1</span></div>
        <div class="line leaf"><i class="sw green"></i><span>绿色:</span><span class="b2">Band_2</span></div>
        <div class="line leaf"><i class="sw blue"></i><span>蓝色:</span><span class="b3">Band_3</span></div>
      </div>
    </aside>

    <section class="center">
      <div class="mapframe">
        <div class="map"><svg id="scene" viewBox="0 0 189 189" role="img" aria-label="影像"><g id="cells" shape-rendering="crispEdges"></g><path d="m155 24 21 16-1 34-32 1-19-24 11-17z" fill="#c8f1d1" stroke="#6d766d" stroke-width=".6"/></svg></div>
        <div class="vtrack"><i></i></div>
        <div class="viewbar">
          <button class="on" aria-label="数据视图"><svg><use href="#mapview"/></svg></button>
          <button aria-label="布局视图"><svg><use href="#layout"/></svg></button>
          <span class="sep"></span>
          <button aria-label="刷新"><svg><use href="#refresh"/></svg></button>
          <button aria-label="暂停"><svg><use href="#pause"/></svg></button>
          <i class="hthumb"></i>
        </div>
      </div>
      <div class="attrs">
        <div class="caption"><h2>表</h2><button aria-label="固定"><svg><use href="#pin"/></svg></button><button aria-label="关闭"><svg><use href="#close"/></svg></button></div>
        <div class="bar">
          <button class="tb" aria-label="表选项"><svg><use href="#options"/></svg></button><button class="drop" aria-label="表选项菜单"></button>
          <span class="sep"></span>
          <button class="tb" aria-label="关联表"><svg><use href="#related"/></svg></button><button class="drop" aria-label="关联表菜单"></button>
          <span class="sep"></span>
          <button class="tb" aria-label="按属性选择"><svg><use href="#selattr"/></svg></button>
          <button class="tb" aria-label="切换选择"><svg><use href="#switch"/></svg></button>
          <button class="tb" aria-label="清除所选"><svg><use href="#clear"/></svg></button>
          <button class="tb" aria-label="缩放至所选"><svg><use href="#zoomsel"/></svg></button>
          <button class="tb" aria-label="删除所选"><svg><use href="#delete"/></svg></button>
        </div>
        <div class="caption"><h2>New_Shapefile</h2><button aria-label="关闭表"><svg><use href="#close"/></svg></button></div>
        <div class="grid">
          <table>
            <colgroup><col class="c0"><col class="c1"><col class="c2"><col class="c3"><col class="c4"></colgroup>
            <thead><tr><th></th><th>FID</th><th>Shape *</th><th>Id</th><th>class_id</th></tr></thead>
            <tbody>
              <tr><th><svg><use href="#next"/></svg></th><td>0</td><td class="shape">面</td><td>0</td><td class="cur">1</td></tr>
              <tr><th></th><td></td><td></td><td></td><td></td></tr>
            </tbody>
          </table>
        </div>
        <div class="pager">
          <button aria-label="第一条"><svg><use href="#first"/></svg></button>
          <button aria-label="上一条"><svg><use href="#prev"/></svg></button>
          <input type="text" value="1" aria-label="记录">
          <button aria-label="下一条"><svg><use href="#next"/></svg></button>
          <button aria-label="最后一条"><svg><use href="#last"/></svg></button>
          <span class="sep"></span>
          <button class="tb on" aria-label="显示所有记录"><svg><use href="#allrec"/></svg></button>
          <button class="tb" aria-label="显示所选记录"><svg><use href="#selrec"/></svg></button>
          <span class="sep"></span>
          <svg class="i16"><use href="#pencil"/></svg><span>(0 / 1 已选择)</span>
        </div>
        <div class="tabs"><button class="active">New_Shapefile</button></div>
      </div>
    </section>

    <aside class="catalog">
      <div class="caption"><h2>目录</h2><button aria-label="固定"><svg><use href="#pin"/></svg></button><button aria-label="关闭"><svg><use href="#close"/></svg></button></div>
      <div class="bar">
        <button class="tb" aria-label="后退"><svg><use href="#goback"/></svg></button><button class="drop" aria-label="后退列表"></button>
        <button class="tb" aria-label="前进"><svg><use href="#gofwd"/></svg></button>
        <button class="tb" aria-label="向上一级"><svg><use href="#up"/></svg></button>
        <button class="tb" aria-label="主目录"><svg><use href="#home"/></svg></button>
        <button class="tb" aria-label="默认地理数据库"><svg><use href="#dbhome"/></svg></button>
        <span class="sep"></span>
        <button class="tb" aria-label="视图"><svg><use href="#details"/></svg></button><button class="drop gray" aria-label="视图选项"></button>
        <span class="sep"></span>
        <button class="tb" aria-label="连接文件夹"><svg><use href="#addfolder"/></svg></button>
        <span class="sep"></span>
        <button class="more" aria-label="更多">»</button>
      </div>
      <div class="location"><label for="loc">位置:</label><span class="combo"><svg class="i16"><use href="#raster"/></svg><select id="loc"><option>000000000.tif</option></select><svg><use href="#chev"/></svg></span></div>
      <div class="treebox">
        <div class="tree" id="tree">
          <div class="node l0"><button class="ex" aria-label="折叠"></button><svg class="i16"><use href="#connect"/></svg><span>D:\DayDayUP\Eco_data</span></div>
          <div class="node l1"><button class="ex" aria-label="折叠"></button><svg class="i16"><use href="#folder"/></svg><span>DeepData</span></div>
          <div class="node l2"><button class="ex plus" aria-label="展开"></button><svg class="i16"><use href="#folder"/></svg><span>images</span></div>
          <div class="node l2"><button class="ex plus" aria-label="展开"></button><svg class="i16"><use href="#folder"/></svg><span>label</span></div>
          <div class="node l2"><button class="ex plus" aria-label="展开"></button><svg class="i16"><use href="#folder"/></svg><span>MyProject</span></div>
          <div class="node l2"><button class="ex plus" aria-label="展开"></button><svg class="i16"><use href="#folder"/></svg><span>shp</span></div>
          <div class="node l2"><button class="ex" aria-label="折叠"></button><svg class="i16"><use href="#folder"/></svg><span>yangben</span></div>
          <div class="node l3"><button class="ex plus" aria-label="展开"></button><svg class="i16"><use href="#folder"/></svg><span>.idea</span></div>
          <div class="node l3"><button class="ex" aria-label="折叠"></button><svg class="i16"><use href="#folder"/></svg><span>picture</span></div>
          <div class="node l4"><button class="ex" aria-label="折叠"></button><svg class="i16"><use href="#folderopen"/></svg><span class="hot">images</span></div>
        </div>
        <div class="vtrack"><i></i></div>
        <div class="htrack"><i></i></div>
      </div>
      <div class="tabs"><button class="active"><svg class="i16"><use href="#catalog"/></svg>目录</button><button><svg class="i16"><use href="#search"/></svg>搜索</button></div>
    </aside>
  </main>
  <footer class="status"><span></span><span></span><span></span></footer>
  <div class="watermark">CSDN @那咋办嘛_</div>
</div>
<script src="app.js"></script>
</body>
</html>
```

FILE: app.js
```
// Each row holds 25 cells, three hex digits per cell.
const raster = [
  "535445557667546021023032345334223334446323676566102413302214315314304202425",
  "545545757777867767656446434656757857867757677777435424425323223001423323234",
  "645755855988787544746757656877988aaa768789788877344545435223020020023121020",
  "000112001756888888234434435656989767889999889767323223234434001010020010121",
  "100000101534534624756324213214215888767999788244434334234222001001010001012",
  "100000100001204645645546746989aab99a99a99a666455244234233222111111001000001",
  "31200100220162488999b99bcaabcba9baababb676566556354344233222222111111111001",
  "534434423423536aab99bbbcabb64653599aaab355466566344434344333333333222222010",
  "76766776876731499bdbdbbdccd64533499a99a677566667344344444333333333222222001",
  "bcdddebcdccd30488aa9ccdcbbc53644699aaab99a788677466333333222222222222222101",
  "ddeddeccdaab203889889aabbbaaaccde88977788999a99a767677223102324536546423424",
  "4453341224443047779cb88aa9adefeef66766799a9aa889889624889bbcccdaacbbdccdbbd",
  "334334000223404413789968889defcde66776899b9aa9aa767434bbcccdbbcbbdbbcbcdbcd",
  "43422301031353564688a99a88a88a878888877888899788767312878789667 88a99b99a88b",
  "53442312221376788a767767545445434545767656566566466424324434324315326336446",
  "546545434313546767324212122122122223101102001132466335223335545335756657768",
  "01012242354643423323400120366743554688a878bbb12255611252499baacaacbbcbbd99b",
  "010010334445445434202989eccffffffffffffffffff354445223435bccbcccccccdcdedde",
  "233432343434444643201878fffffffffefffffdfedee466446456223546355456355355355",
  "43443444444543465454575676799b99a66799a88b344355367446435336446223446213345",
  "43643743643643743654576732564643633632533688b88b233244345233111324aacbbcbcd",
  "32632632732743632643532543464676988b657767769bcdcdc354122345355010323bbdccddee",
  "325326326327327326534545435ddeeeffffffffffffffff355122122355343434556769679",
  "212213324325326326545434204cdcffffeddfeceefffcde899466455566576355355556679",
  "201102101213325326546446435868688bcd88a9ab9bbbbc55844555754643620343467988a"
];

const ns = "http://www.w3.org/2000/svg";
const cells = document.getElementById("cells");
cells.setAttribute("transform", "scale(7.56)");
raster.forEach((line, y) => {
  const codes = line.replace(/ /g, "").match(/.{3}/g);
  codes.slice(0, 25).forEach((code, x) => {
    const cell = document.createElementNS(ns, "rect");
    cell.setAttribute("x", x);
    cell.setAttribute("y", y);
    cell.setAttribute("width", 1);
    cell.setAttribute("height", 1);
    cell.setAttribute("fill", "#" + code);
    cells.append(cell);
  });
});

const tree = document.getElementById("tree");
for (let n = 0; n < 22; n++) {
  const name = String(n).padStart(9, "0") + ".tif";
  tree.insertAdjacentHTML("beforeend",
    `<div class="node l5"><button class="ex plus" aria-label="展开"></button><svg class="i16"><use href="#raster"/></svg><span>${name}</span></div>`);
}
```

FILE: styles.css
```
* { box-sizing: border-box; }
body { margin: 0; font: 13px/20px "Open Sans", "Noto Sans CJK SC", sans-serif; color: #000; background: #f0f0f0; }
button, input, select { font: inherit; color: inherit; margin: 0; padding: 0; border: 0; background: none; }
h2 { margin: 0; font-size: 13px; font-weight: 400; }
i { display: block; }
.sprite { position: absolute; width: 0; height: 0; }
.i16 { width: 16px; height: 16px; flex: none; }

.app { display: flex; flex-direction: column; height: 100vh; overflow: hidden; background: #f5f5f5; }
.titlebar { display: flex; align-items: center; gap: 6px; height: 23px; padding: 0 0 2px 2px; background: linear-gradient(90deg, #e8f3f7, #eaf2fb); flex: none; }
.menubar { display: flex; gap: 17px; height: 29px; padding-left: 12px; align-items: center; flex: none; }
.toolrow { display: flex; height: 27px; flex: none; }
.toolrow + .toolrow { height: 28px; }
.toolbar { display: flex; align-items: center; height: 27px; padding-left: 4px; background: linear-gradient(#fdfdfd, #eee); }
.editor { margin-left: 15px; }
.editor .menu { display: flex; align-items: center; gap: 2px; margin-right: 4px; padding-left: 1px; }
.grip { width: 2px; height: 18px; margin-right: 3px; background: repeating-linear-gradient(#bbb 0 2px, transparent 2px 4px); }
.sep { width: 1px; height: 17px; margin: 0 3px 0 2px; background: #b8b8b8; flex: none; }
.tb { display: grid; place-items: center; width: 22px; height: 22px; flex: none; }
.tb svg { width: 16px; height: 16px; }
.on { background: #dceaf6; box-shadow: inset 0 0 0 1px #0078d7; }
.drop { display: grid; place-items: center; width: 11px; height: 22px; flex: none; }
.drop::before, .caret { content: ""; width: 0; border: 3px solid transparent; border-top-color: #000; border-bottom: 0; }
.drop.off::before { border-top-color: #999; }
.drop.gray::before { border-top-color: #666; }
.over { display: flex; align-items: flex-end; justify-content: center; width: 11px; height: 25px; margin: 2px 0 0 2px; padding-bottom: 3px; background: linear-gradient(#eee, #a8a8a8); }
.over svg { width: 8px; height: 8px; }
.combo { display: flex; align-items: center; gap: 4px; height: 20px; padding: 0 3px; background: #fff; border: 1px solid #8a8a8a; border-radius: 2px; font-size: 11px; }
.combo select { appearance: none; flex: 1; min-width: 0; outline: 0; }
.combo svg:last-child { width: 10px; height: 10px; flex: none; }
.scale { width: 148px; padding-left: 2px; font: 11px "Liberation Mono", monospace; }

.work { display: grid; grid-template-columns: 313px minmax(0, 1fr) 250px; column-gap: 4px; flex: 1; min-height: 0; background: #f0f0f0; }
.contents, .center, .catalog, .attrs { display: flex; flex-direction: column; min-height: 0; min-width: 0; }
.caption { display: flex; align-items: center; height: 24px; padding: 0 1px 0 4px; flex: none; background: linear-gradient(90deg, #bccbda, #d6e4f2); }
.caption h2 { flex: 1; }
.caption button { display: grid; place-items: center; width: 16px; height: 16px; }
.caption svg { width: 10px; height: 10px; }
.bar { display: flex; align-items: center; height: 26px; padding-left: 4px; flex: none; background: linear-gradient(#fcfcfc, #eee); }
.toc { flex: 1; margin-right: 1px; border: 1px solid #828790; background: #fff; padding-top: 1px; }
.line { display: flex; align-items: center; height: 22px; padding-left: 27px; white-space: nowrap; }
.line.root { padding-left: 8px; }
.root .i16 { margin: 0 4px 0 6px; }
.line.leaf { padding-left: 59px; }
.line.rgb { padding-left: 82px; }
.line label { display: flex; align-items: center; gap: 7px; margin-left: 8px; }
.sel { padding: 1px 2px; margin-left: -1px; background: #0078d7; color: #fff; }
.toc label span:not(.sel) { padding-left: 1px; }
.toc label .sel, .l5 span { font-size: 14px; }
.b1 { margin-left: 16px; }
.b2 { margin-left: 3px; }
.b3 { margin-left: 12px; }
.sw { width: 15px; height: 11px; margin: 4px 3px 0 0; border: 1px solid #666; }
.mint { background: #c8f1d1; }
.hatch { border-color: #000; background: linear-gradient(135deg, #fff 32%, #58c832 33% 38%, #fff 39% 62%, #58c832 63% 68%, #fff 69%); }
.red { background: red; }
.green { background: #0f0; }
.blue { background: #00f; }
input[type=checkbox] { appearance: none; width: 11px; height: 11px; border: 1px solid #000; background: #fff; }
input[type=checkbox]:checked::before { content: ""; display: block; width: 7px; height: 4px; margin: 1px 0 0 1px; border: solid #000; border-width: 0 0 2px 2px; transform: rotate(-45deg); }
.ex { display: grid; place-items: center; width: 9px; height: 9px; border: 1px solid #909090; border-radius: 1px; background: #f7f7f7; flex: none; }
.ex::before, .ex.plus::after { content: ""; grid-area: 1 / 1; width: 5px; height: 1px; background: #3250a0; }
.ex.plus::after { width: 1px; height: 5px; }

.mapframe { display: grid; grid-template: minmax(0, 1fr) 15px / minmax(0, 1fr) 17px; flex: 1; min-height: 0; margin-right: 1px; border: solid #777; border-width: 1px 0 0 2px; background: #f0f0f0; }
.map { display: grid; place-items: center; background: #fff; border: solid #ddd; border-width: 0 1px 1px 0; padding-left: 115px; overflow: hidden; }
.map svg { width: 189px; height: 189px; margin-top: 18px; }
.vtrack { display: grid; place-items: center; background: #f0f0f0; }
.mapframe .vtrack { align-items: start; }
.mapframe .vtrack i { width: 2px; height: 17px; margin-top: 150px; background: #888; }
.viewbar { grid-column: 1 / -1; display: flex; align-items: center; }
.viewbar button { display: grid; place-items: center; width: 17px; height: 15px; }
.viewbar button svg { width: 9px; height: 9px; }
.viewbar .sep { height: 14px; margin: 0 5px 0 2px; }
.viewbar .on { background: #cce8ff; box-shadow: none; }
.hthumb { width: 17px; height: 2px; margin-left: auto; margin-right: 327px; background: #888; }
.attrs { margin: 6px 0 0; }
.attrs .sep { margin-left: 3px; }
.attrs .drop { width: 10px; }
.grid { height: 131px; margin-top: 1px; border: solid #777; border-width: 3px 0 0 3px; background: #f0f0f0; flex: none; }
table { border-collapse: collapse; table-layout: fixed; width: 361px; font: 11px/13px "Liberation Mono", "Noto Sans CJK SC", monospace; background: #fff; }
.c0 { width: 18px; } .c1 { width: 100px; } .c2 { width: 90px; } .c3 { width: 63px; } .c4 { width: 90px; }
th, td { height: 15px; padding: 0 4px; border: 1px solid #6c6c6c; text-align: right; }
thead th { height: 16px; border-color: #000; background: #f5f5f5; text-align: center; font-size: 12px; font-weight: 700; }
tbody th { padding: 0; background: #f0f0f0; border-color: #000; }
tbody th svg { display: block; width: 12px; height: 10px; margin: 0 auto; }
td.shape { text-align: left; color: #8b7a70; }
td.cur { border: 2px solid #000; }
.pager { display: flex; align-items: center; height: 31px; margin-right: 1px; padding-left: 6px; border: solid #e0e0e0; border-width: 1px 0; background: linear-gradient(#fcfcfc, #f0f0f0); flex: none; }
.pager button:not(.tb) { display: grid; place-items: center; width: 22px; height: 22px; }
.pager button:not(.tb) svg { width: 10px; height: 10px; }
.pager input { width: 60px; height: 24px; padding-right: 4px; text-align: right; background: #fff; }
.pager .sep { margin: 0 3px 0 2px; height: 18px; }
.pager .i16 { margin-right: 2px; }
.tabs { display: flex; height: 24px; padding: 1px 0 1px 2px; flex: none; background: #f5f5f5; }
.tabs button { display: flex; align-items: center; gap: 3px; padding: 0 5px; border: solid #999; border-width: 0 1px 1px 0; border-radius: 0 0 3px 3px; }
.tabs .active { background: #fff; border-left-width: 1px; }

.catalog .drop { width: 17px; }
.catalog .tb { width: 23px; }
.catalog .bar { height: 25px; }
.catalog .sep { margin: 0 5px 0 3px; background: #777; height: 18px; }
.catalog .more { margin-left: auto; padding-right: 3px; align-self: flex-start; line-height: 14px; font-size: 15px; color: #5a5a9a; }
.location { display: flex; align-items: center; height: 25px; padding: 0 2px; flex: none; font-size: 12px; }
.location label { width: 52px; }
.location .combo { flex: 1; height: 22px; padding: 0 4px 0 2px; }
.treebox { display: grid; grid-template: minmax(0, 1fr) 16px / minmax(0, 1fr) 17px; flex: 1; min-height: 0; margin: 0 2px 0 1px; border: solid #777; border-width: 2px 1px 1px 2px; border-right-color: #ddd; border-bottom-color: #ddd; }
.tree { background: #fff; overflow: hidden; }
.node { display: flex; align-items: center; height: 19px; white-space: nowrap; }
.node .i16 { margin: 0 4px 0 6px; }
.node span { line-height: 19px; padding: 0 1px; }
.node .hot { background: #eee; }
.l0 { padding-left: 4px; } .l1 { padding-left: 23px; } .l2 { padding-left: 42px; }
.l3 { padding-left: 61px; } .l4 { padding-left: 80px; } .l5 { padding-left: 99px; }
.treebox .vtrack { align-items: start; }
.treebox .vtrack i { width: 2px; height: 78px; margin-top: 43px; background: #888; }
.htrack { grid-column: 1 / -1; display: flex; align-items: center; background: #f0f0f0; }
.htrack i { width: 142px; height: 2px; margin-left: 29px; background: #888; }
.catalog .tabs { margin-top: 4px; padding-left: 2px; }
.catalog .tabs button { gap: 2px; padding: 0 4px; }
.catalog .tabs button:not(.active) { color: #666; }
.status { display: flex; justify-content: flex-end; height: 10px; background: #f0f0f0; flex: none; }
.status span { width: 20px; border-left: 1px solid #e2e2e2; margin-top: 2px; }
.status span:first-child { width: 127px; }
.status span:last-child { width: 36px; }
.watermark { position: absolute; right: 14px; bottom: 6px; font-size: 19px; line-height: 24px; color: rgba(135, 135, 135, .75); text-shadow: 1px 1px 0 #fff; }
```
